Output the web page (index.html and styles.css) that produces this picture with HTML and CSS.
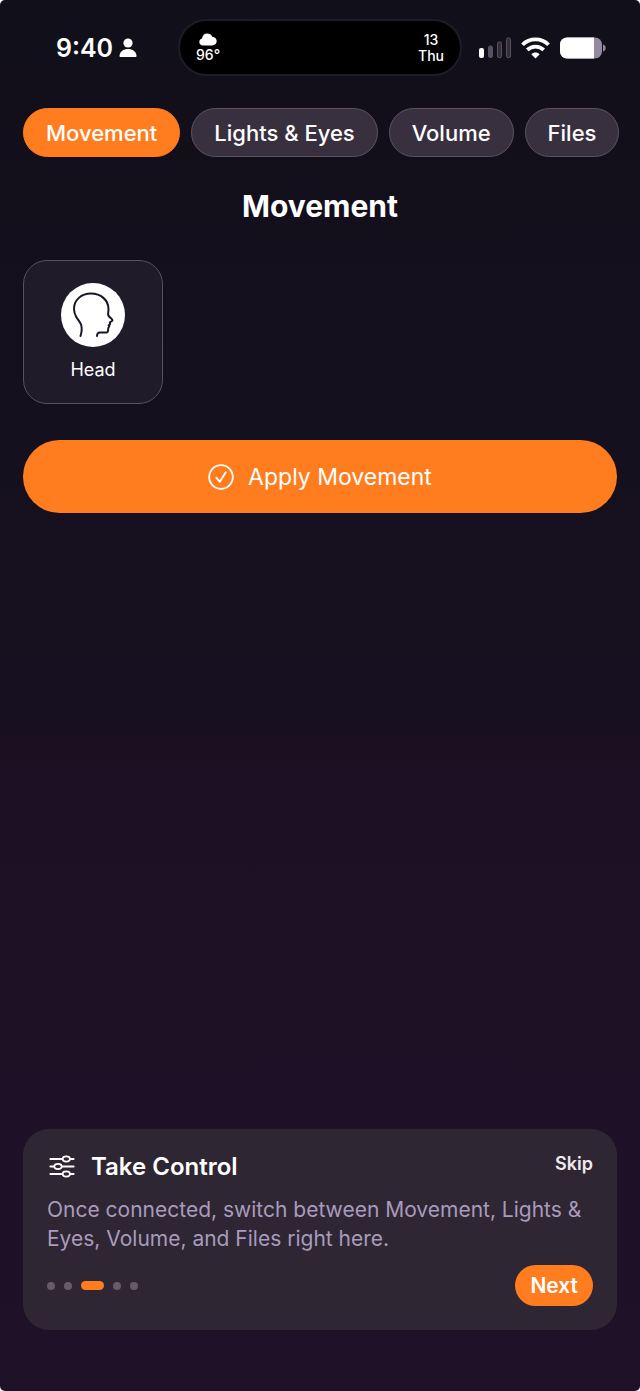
FILE: index.html
```html
<!DOCTYPE html>
<html lang="en">
<head>
  <meta charset="UTF-8" />
  <meta name="viewport" content="width=device-width, initial-scale=1" />
  <title>Movement</title>
  <link rel="stylesheet" href="styles.css">
</head>
<body>

<div class="screen">
  <header class="status-bar">
    <div class="status-left">
      <span class="time">9:40</span>
      <svg width="18" height="20" viewBox="0 0 18 20" fill="currentColor" aria-hidden="true">
        <circle cx="9" cy="5" r="4.600" />
        <path d="M0.500 17.500C1 13.500 4.500 11 9 11s8 2.500 8.500 6.500c.1 1-.3 1.500-1.200 1.500H1.700c-.9 0-1.300-.5-1.200-1.500z" />
      </svg>
    </div>
    <div class="island">
      <div class="island-item">
        <svg width="18" height="14" viewBox="0 0 18 14" fill="currentColor" aria-hidden="true">
          <path d="M4.200 12.500C2 12.500.3 11 .3 8.900c0-1.700 1.100-3 2.700-3.400C3.400 2.600 5.500.6 8.300.6c2.300 0 4.100 1.200 4.900 3.200 2.600.1 4.500 1.900 4.500 4.300 0 2.500-1.900 4.400-4.500 4.400z" />
        </svg>
        <span>96°</span>
      </div>
      <div class="island-item">
        <span>13</span>
        <span>Thu</span>
      </div>
    </div>
    <div class="status-right">
      <svg width="32" height="22" viewBox="0 0 32 22" aria-hidden="true">
        <rect x="0" y="11" width="5" height="10" rx="2" fill="#fff" />
        <rect x="9.500" y="9" width="4" height="11.500" rx="1.500" fill="#57505f" stroke="#57505f" />
        <rect x="18.500" y="5" width="4" height="15.500" rx="1.500" fill="#322c3c" stroke="#57505f" />
        <rect x="27.500" y="1" width="4" height="19.500" rx="1.500" fill="#322c3c" stroke="#57505f" />
      </svg>
      <svg width="29" height="22" viewBox="0 0 29 22" fill="none" stroke="#fff" stroke-width="3.800" aria-hidden="true">
        <path d="M1.500 7.800C8.500.600 20.500.600 27.500 7.800" />
        <path d="M6.300 12.900c4.700-4.500 11.700-4.500 16.400 0" />
        <path d="M14.500 21.500l-4.200-4.200c2.300-2.300 6.100-2.300 8.400 0z" fill="#fff" stroke="none" />
      </svg>
      <svg width="46" height="22" viewBox="0 0 46 22" aria-hidden="true">
        <clipPath id="cell"><rect x="0" y="0.500" width="42" height="21" rx="7" /></clipPath>
        <g clip-path="url(#cell)">
          <rect width="42" height="22" fill="#95899f" />
          <rect width="34" height="22" fill="#fff" />
        </g>
        <path d="M43 7.500c1.700.4 2.700 1.700 2.700 3.500S44.700 14.100 43 14.500z" fill="#95899f" />
      </svg>
    </div>
  </header>

  <nav class="tabs">
    <button class="tab active">Movement</button>
    <button class="tab">Lights &amp; Eyes</button>
    <button class="tab">Volume</button>
    <button class="tab">Files</button>
  </nav>

  <main class="content">
    <h1>Movement</h1>
    <div class="parts">
      <button class="part">
        <svg width="64" height="64" viewBox="0 0 64 64" aria-hidden="true">
          <circle cx="32" cy="32" r="32" fill="#fff" />
          <path d="M19.500 53c1.300-4 1.500-8 .7-11-.9-3-3.200-5-4.900-8-1.500-2.700-2.300-5-2.300-8 0-9 7.300-15.500 17-15.500s17.500 6.500 17.500 15.500c0 2-.5 4-.3 6 .3 2 4.300 4 4.300 5.300 0 1.100-2.500 1.400-2.700 2.200 0 .8.500 1.400.1 2l-1.300.8.700 1.200c-1.600 1-1 2.400-1.200 4-.2 2-1.500 2.200-3.200 2-2 0-4-.3-5.600 0-1.300.3-2.200 1.300-2.300 3.500" fill="none" stroke="#1a1525" stroke-width="2" stroke-linecap="round" stroke-linejoin="round" />
        </svg>
        <span>Head</span>
      </button>
    </div>
    <button class="apply">
      <svg width="26" height="26" viewBox="0 0 26 26" fill="none" stroke="currentColor" stroke-width="1.800" stroke-linecap="round" stroke-linejoin="round" aria-hidden="true">
        <circle cx="13" cy="13" r="11.800" />
        <path d="M8.300 13.700l3.500 4.100 6-9.500" />
      </svg>
      Apply Movement
    </button>
  </main>

  <section class="tip">
    <div class="tip-head">
      <svg width="26" height="24" viewBox="0 0 26 24" fill="none" stroke="#fff" stroke-width="2.200" stroke-linecap="round" aria-hidden="true">
        <path d="M1.500 4h12M21 4h3.500M1.500 11.500h3.500M13 11.500h11.500M1.500 19h12M21 19h3.500" />
        <ellipse cx="17.300" cy="4" rx="3.700" ry="2.600" stroke-width="1.700" />
        <ellipse cx="9" cy="11.500" rx="3.700" ry="2.600" stroke-width="1.700" />
        <ellipse cx="17.300" cy="19" rx="3.700" ry="2.600" stroke-width="1.700" />
      </svg>
      <h2>Take Control</h2>
      <button class="skip">Skip</button>
    </div>
    <p>Once connected, switch between Movement, Lights &amp; Eyes, Volume, and Files right here.</p>
    <div class="tip-foot">
      <div class="dots">
        <span class="dot"></span>
        <span class="dot"></span>
        <span class="dot current"></span>
        <span class="dot"></span>
        <span class="dot"></span>
      </div>
      <button class="next">Next</button>
    </div>
  </section>
</div>

</body>
</html>
```

FILE: styles.css
```css
* {
  box-sizing: border-box;
}
html {
  background: #fff;
}
body {
  margin: 0;
  font-family: Inter, "Liberation Sans", sans-serif;
  color: #fff;
}
button {
  font: inherit;
  color: inherit;
  border: none;
  background: none;
  padding: 0;
  cursor: pointer;
}
svg {
  display: block;
  flex: none;
}
.screen {
  min-height: 100vh;
  display: flex;
  flex-direction: column;
  padding-bottom: 61px;
  border-radius: 5px;
  background: linear-gradient(#110f1a, #171020 52%, #1e1024 56%, #1e1128);
}

/* status bar */
.status-bar {
  display: grid;
  grid-template-columns: 1fr 284px 1fr;
  align-items: center;
  padding-top: 19px;
}
.status-left {
  display: flex;
  align-items: center;
  gap: 6px;
  padding-left: 56px;
}
.time {
  font-size: 25px;
  font-weight: 600;
}
.island {
  display: flex;
  justify-content: space-between;
  align-items: center;
  height: 57px;
  padding: 0 16px;
  border: 2px solid #201b29;
  border-radius: 29px;
  background: #000;
}
.island-item {
  display: flex;
  flex-direction: column;
  align-items: center;
  font-size: 14px;
  font-weight: 500;
  line-height: 16px;
}
.status-right {
  display: flex;
  align-items: center;
  gap: 10px;
  padding-left: 17px;
}

/* tabs */
.tabs {
  display: flex;
  gap: 11px;
  margin-top: 32px;
  padding-left: 23px;
  overflow: hidden;
}
.tab {
  flex: none;
  height: 49px;
  padding: 0 22px;
  border: 1px solid #5b5465;
  border-radius: 25px;
  background: #38303f;
  font-size: 22px;
  font-weight: 500;
}
.tab.active {
  border-color: #ff7d1f;
  background: #ff7d1f;
}

.content {
  padding: 0 23px;
}
h1 {
  margin: 29px 0 34px;
  font-size: 30px;
  line-height: 40px;
  font-weight: 700;
  text-align: center;
}
.parts {
  display: flex;
  gap: 12px;
}
.part {
  display: flex;
  flex-direction: column;
  align-items: center;
  gap: 12px;
  width: 140px;
  height: 144px;
  padding-top: 22px;
  border: 1px solid #57505f;
  border-radius: 24px;
  background: #201b29;
  font-size: 18px;
  line-height: 22px;
}
.apply {
  display: flex;
  justify-content: center;
  align-items: center;
  gap: 14px;
  width: 100%;
  height: 73px;
  margin-top: 36px;
  border-radius: 37px;
  background: #ff7d1f;
  font-size: 23px;
}

/* onboarding tip */
.tip {
  margin: auto 23px 0;
  padding: 24px;
  border-radius: 26px;
  background: #2e2632;
}
.tip-head {
  display: flex;
  align-items: center;
  gap: 16px;
  padding-left: 2px;
}
h2 {
  flex: 1;
  margin: 0;
  font-size: 24px;
  line-height: 28px;
  font-weight: 600;
}
.skip {
  align-self: flex-start;
  color: #f0e8ee;
  font-size: 18px;
  line-height: 22px;
  font-weight: 600;
}
.tip p {
  margin: 14px 0 12px;
  color: #a99bbd;
  font-size: 21px;
  line-height: 29px;
}
.tip-foot {
  display: flex;
  justify-content: space-between;
  align-items: center;
}
.dots {
  display: flex;
  align-items: center;
  gap: 9px;
}
.dot {
  width: 8px;
  height: 8px;
  border-radius: 4px;
  background: #655b6d;
}
.dot.current {
  width: 23px;
  height: 9px;
  border-radius: 5px;
  background: #ff7d1f;
}
.next {
  height: 41px;
  padding: 0 15px;
  border-radius: 21px;
  background: #ff7d1f;
  font-size: 21px;
  font-weight: 600;
}
```
